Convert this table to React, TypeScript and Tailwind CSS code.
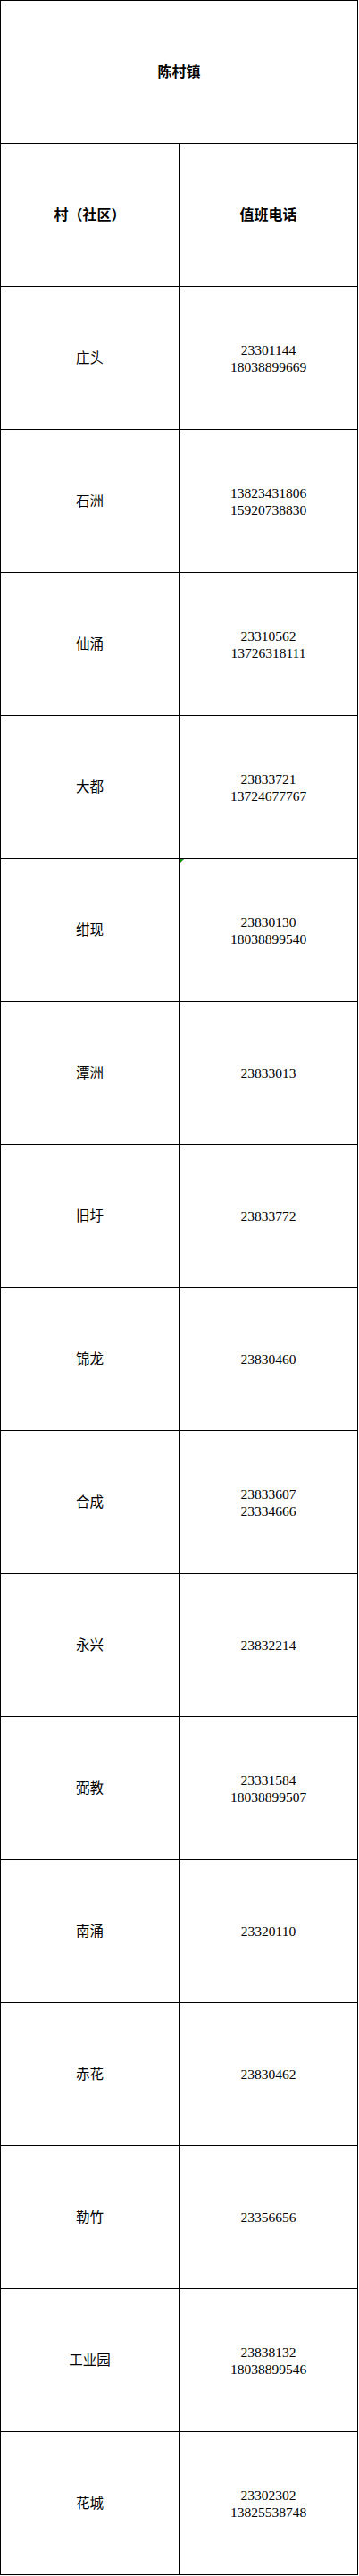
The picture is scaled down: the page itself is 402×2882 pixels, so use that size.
import React from "react";

const rows: [string, string[]][] = [
  ["庄头", ["23301144", "18038899669"]],
  ["石洲", ["13823431806", "15920738830"]],
  ["仙涌", ["23310562", "13726318111"]],
  ["大都", ["23833721", "13724677767"]],
  ["绀现", ["23830130", "18038899540"]],
  ["潭洲", ["23833013"]],
  ["旧圩", ["23833772"]],
  ["锦龙", ["23830460"]],
  ["合成", ["23833607", "23334666"]],
  ["永兴", ["23832214"]],
  ["弼教", ["23331584", "18038899507"]],
  ["南涌", ["23320110"]],
  ["赤花", ["23830462"]],
  ["勒竹", ["23356656"]],
  ["工业园", ["23838132", "18038899546"]],
  ["花城", ["23302302", "13825538748"]],
];

const font = { fontFamily: '"Liberation Serif", "Noto Sans CJK SC", serif' };

export default function App() {
  return (
    <div className="bg-white w-[402px] min-h-[2882px]">
      <div
        className="w-[401px] border-l border-t border-black text-black text-[15.5px] leading-[19px]"
        style={font}
      >
        <div className="h-[160px] border-r border-b border-black flex items-center justify-center font-bold text-[16px]">
          陈村镇
        </div>
        <div className="grid grid-cols-[200px_200px]">
          <div className="h-[160px] border-r border-b border-black flex items-center justify-center font-bold text-[16px]">
            村（社区）
          </div>
          <div className="h-[160px] border-r border-b border-black flex items-center justify-center font-bold text-[16px]">
            值班电话
          </div>
        </div>
        {rows.map(([name, phones], i) => (
          <div key={name} className="grid grid-cols-[200px_200px]">
            <div className="h-[160px] border-r border-b border-black flex items-center justify-center">
              {name}
            </div>
            <div className="relative h-[160px] border-r border-b border-black flex flex-col items-center justify-center">
              {i === 4 && (
                <svg className="absolute left-0 top-0" width="6" height="6" viewBox="0 0 6 6">
                  <polygon points="0,0 5,0 0,5" fill="#1a8a1a" />
                </svg>
              )}
              {phones.map((p) => (
                <div key={p}>{p}</div>
              ))}
            </div>
          </div>
        ))}
      </div>
    </div>
  );
}
